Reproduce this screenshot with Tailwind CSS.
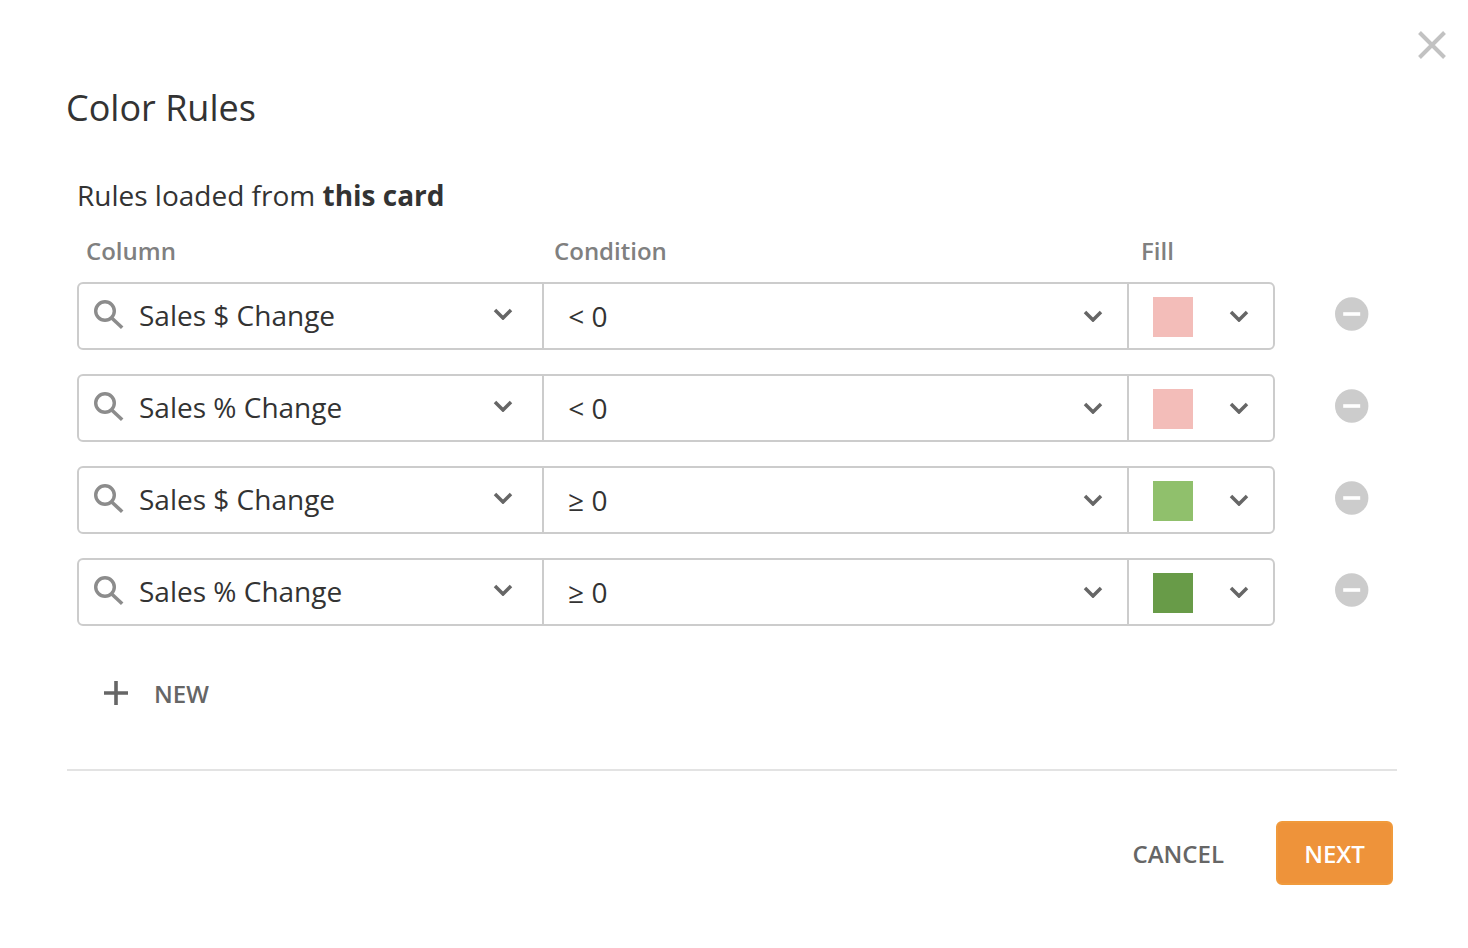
<!DOCTYPE html>
<html lang="en">
<head>
<meta charset="utf-8">
<meta name="viewport" content="width=device-width, initial-scale=1">
<title>Color Rules</title>
<script src="https://cdn.jsdelivr.net/npm/@tailwindcss/browser@4"></script>
</head>
<body class="bg-white font-['Open_Sans',sans-serif] text-[#333333]">
<svg class="hidden" aria-hidden="true">
  <symbol id="chevron" viewBox="0 0 20 12"><path d="M2 2l8 8 8-8" fill="none" stroke="#666666" stroke-width="3.5"/></symbol>
  <symbol id="search" viewBox="0 0 30 30"><circle cx="11" cy="11" r="9.3" fill="none" stroke="#8c8c8c" stroke-width="3.4"/><path d="M18 18.3l10.2 9.4" fill="none" stroke="#8c8c8c" stroke-width="3.6"/></symbol>
  <symbol id="remove" viewBox="0 0 34 34"><circle cx="16.7" cy="17" r="16.7" fill="#cccccc"/><path d="M8.2 17h17" stroke="#ffffff" stroke-width="3.6"/></symbol>
</svg>
<main role="dialog" aria-labelledby="title" class="flex flex-col">
  <header class="flex flex-col">
    <button type="button" aria-label="Close" class="mt-7 mr-[19px] self-end p-0.5">
      <svg class="size-[30px]" viewBox="0 0 30 30" aria-hidden="true"><path d="M2.5 2.5l25 25M27.500 2.500L2.500 27.500" fill="none" stroke="#c2c2c2" stroke-width="4"/></svg>
    </button>
    <h1 id="title" class="mt-5 ml-[66px] text-[36px] leading-[52px]">Color Rules</h1>
  </header>

  <form class="mr-[71px] ml-[67px] flex flex-col">
    <section class="flex flex-col border-b-2 border-[#e3e3e3] pb-[55px] pl-[10px]">
      <p class="mt-10 text-[28px] leading-[42px]">Rules loaded from <strong class="font-bold">this card</strong></p>

      <div class="mr-[122px] flex pt-4 pb-3 text-[24px] leading-[38px] font-semibold text-[#808080]">
        <span id="col" class="flex-[467] pl-[9px]">Column</span>
        <span id="cond" class="flex-[585] pl-[9px]">Condition</span>
        <span id="fill" class="w-[146px] pl-3">Fill</span>
      </div>

      <ul class="flex flex-col gap-6">
        <li class="flex items-center gap-[60px]">
          <div class="flex h-[68px] flex-1 rounded-md border-2 border-[#cccccc]">
            <div class="grid flex-[465] grid-cols-1 items-center border-r-2 border-[#cccccc]">
              <select aria-labelledby="col" class="col-start-1 row-start-1 h-16 appearance-none pb-0.5 pl-[60px] text-[28px]"><option>Sales $ Change</option></select>
              <svg class="pointer-events-none col-start-1 row-start-1 mb-0.5 ml-[15px] size-[30px]" aria-hidden="true"><use href="#search"/></svg>
              <svg class="pointer-events-none col-start-1 row-start-1 mr-[29px] mb-1 h-3 w-5 justify-self-end" aria-hidden="true"><use href="#chevron"/></svg>
            </div>
            <div class="grid flex-[585] grid-cols-1 items-center border-r-2 border-[#cccccc]">
              <select aria-labelledby="cond" class="col-start-1 row-start-1 h-16 appearance-none pl-6 text-[28px]"><option>&lt; 0</option></select>
              <svg class="pointer-events-none col-start-1 row-start-1 mr-6 h-3 w-5 justify-self-end" aria-hidden="true"><use href="#chevron"/></svg>
            </div>
            <button type="button" aria-labelledby="fill" aria-haspopup="listbox" class="flex w-[144px] items-center justify-between pr-6 pl-6">
              <span class="mt-0.5 size-10 bg-[#f3bdb9]"></span>
              <svg class="h-3 w-5" aria-hidden="true"><use href="#chevron"/></svg>
            </button>
          </div>
          <button type="button" aria-label="Remove rule" class="mr-7 mb-1"><svg class="size-[34px]" aria-hidden="true"><use href="#remove"/></svg></button>
        </li>
        <li class="flex items-center gap-[60px]">
          <div class="flex h-[68px] flex-1 rounded-md border-2 border-[#cccccc]">
            <div class="grid flex-[465] grid-cols-1 items-center border-r-2 border-[#cccccc]">
              <select aria-labelledby="col" class="col-start-1 row-start-1 h-16 appearance-none pb-0.5 pl-[60px] text-[28px]"><option>Sales % Change</option></select>
              <svg class="pointer-events-none col-start-1 row-start-1 mb-0.5 ml-[15px] size-[30px]" aria-hidden="true"><use href="#search"/></svg>
              <svg class="pointer-events-none col-start-1 row-start-1 mr-[29px] mb-1 h-3 w-5 justify-self-end" aria-hidden="true"><use href="#chevron"/></svg>
            </div>
            <div class="grid flex-[585] grid-cols-1 items-center border-r-2 border-[#cccccc]">
              <select aria-labelledby="cond" class="col-start-1 row-start-1 h-16 appearance-none pl-6 text-[28px]"><option>&lt; 0</option></select>
              <svg class="pointer-events-none col-start-1 row-start-1 mr-6 h-3 w-5 justify-self-end" aria-hidden="true"><use href="#chevron"/></svg>
            </div>
            <button type="button" aria-labelledby="fill" aria-haspopup="listbox" class="flex w-[144px] items-center justify-between pr-6 pl-6">
              <span class="mt-0.5 size-10 bg-[#f3bdb9]"></span>
              <svg class="h-3 w-5" aria-hidden="true"><use href="#chevron"/></svg>
            </button>
          </div>
          <button type="button" aria-label="Remove rule" class="mr-7 mb-1"><svg class="size-[34px]" aria-hidden="true"><use href="#remove"/></svg></button>
        </li>
        <li class="flex items-center gap-[60px]">
          <div class="flex h-[68px] flex-1 rounded-md border-2 border-[#cccccc]">
            <div class="grid flex-[465] grid-cols-1 items-center border-r-2 border-[#cccccc]">
              <select aria-labelledby="col" class="col-start-1 row-start-1 h-16 appearance-none pb-0.5 pl-[60px] text-[28px]"><option>Sales $ Change</option></select>
              <svg class="pointer-events-none col-start-1 row-start-1 mb-0.5 ml-[15px] size-[30px]" aria-hidden="true"><use href="#search"/></svg>
              <svg class="pointer-events-none col-start-1 row-start-1 mr-[29px] mb-1 h-3 w-5 justify-self-end" aria-hidden="true"><use href="#chevron"/></svg>
            </div>
            <div class="grid flex-[585] grid-cols-1 items-center border-r-2 border-[#cccccc]">
              <select aria-labelledby="cond" class="col-start-1 row-start-1 h-16 appearance-none pl-6 text-[28px]"><option>≥ 0</option></select>
              <svg class="pointer-events-none col-start-1 row-start-1 mr-6 h-3 w-5 justify-self-end" aria-hidden="true"><use href="#chevron"/></svg>
            </div>
            <button type="button" aria-labelledby="fill" aria-haspopup="listbox" class="flex w-[144px] items-center justify-between pr-6 pl-6">
              <span class="mt-0.5 size-10 bg-[#90c06c]"></span>
              <svg class="h-3 w-5" aria-hidden="true"><use href="#chevron"/></svg>
            </button>
          </div>
          <button type="button" aria-label="Remove rule" class="mr-7 mb-1"><svg class="size-[34px]" aria-hidden="true"><use href="#remove"/></svg></button>
        </li>
        <li class="flex items-center gap-[60px]">
          <div class="flex h-[68px] flex-1 rounded-md border-2 border-[#cccccc]">
            <div class="grid flex-[465] grid-cols-1 items-center border-r-2 border-[#cccccc]">
              <select aria-labelledby="col" class="col-start-1 row-start-1 h-16 appearance-none pb-0.5 pl-[60px] text-[28px]"><option>Sales % Change</option></select>
              <svg class="pointer-events-none col-start-1 row-start-1 mb-0.5 ml-[15px] size-[30px]" aria-hidden="true"><use href="#search"/></svg>
              <svg class="pointer-events-none col-start-1 row-start-1 mr-[29px] mb-1 h-3 w-5 justify-self-end" aria-hidden="true"><use href="#chevron"/></svg>
            </div>
            <div class="grid flex-[585] grid-cols-1 items-center border-r-2 border-[#cccccc]">
              <select aria-labelledby="cond" class="col-start-1 row-start-1 h-16 appearance-none pl-6 text-[28px]"><option>≥ 0</option></select>
              <svg class="pointer-events-none col-start-1 row-start-1 mr-6 h-3 w-5 justify-self-end" aria-hidden="true"><use href="#chevron"/></svg>
            </div>
            <button type="button" aria-labelledby="fill" aria-haspopup="listbox" class="flex w-[144px] items-center justify-between pr-6 pl-6">
              <span class="mt-0.5 size-10 bg-[#689b48]"></span>
              <svg class="h-3 w-5" aria-hidden="true"><use href="#chevron"/></svg>
            </button>
          </div>
          <button type="button" aria-label="Remove rule" class="mr-7 mb-1"><svg class="size-[34px]" aria-hidden="true"><use href="#remove"/></svg></button>
        </li>
      </ul>

      <button type="button" class="mt-12 ml-[27px] flex items-center gap-[26px] self-start text-[24px] leading-10 font-semibold text-[#666666]">
        <svg class="mb-0.5 size-6" viewBox="0 0 24 24" aria-hidden="true"><path d="M12 0v24M0 12h24" stroke="#666666" stroke-width="3.6"/></svg>
        NEW
      </button>
    </section>

    <footer class="mt-[50px] mr-1 flex items-center justify-end gap-[52px] text-[24px] font-semibold">
      <button type="button" class="h-16 pt-0.5 text-[#666666]">CANCEL</button>
      <button type="submit" class="h-16 w-[117px] rounded-md border-2 border-[#f09a3c] bg-[#ee933a] pt-0.5 text-white">NEXT</button>
    </footer>
  </form>
</main>
</body>
</html>
